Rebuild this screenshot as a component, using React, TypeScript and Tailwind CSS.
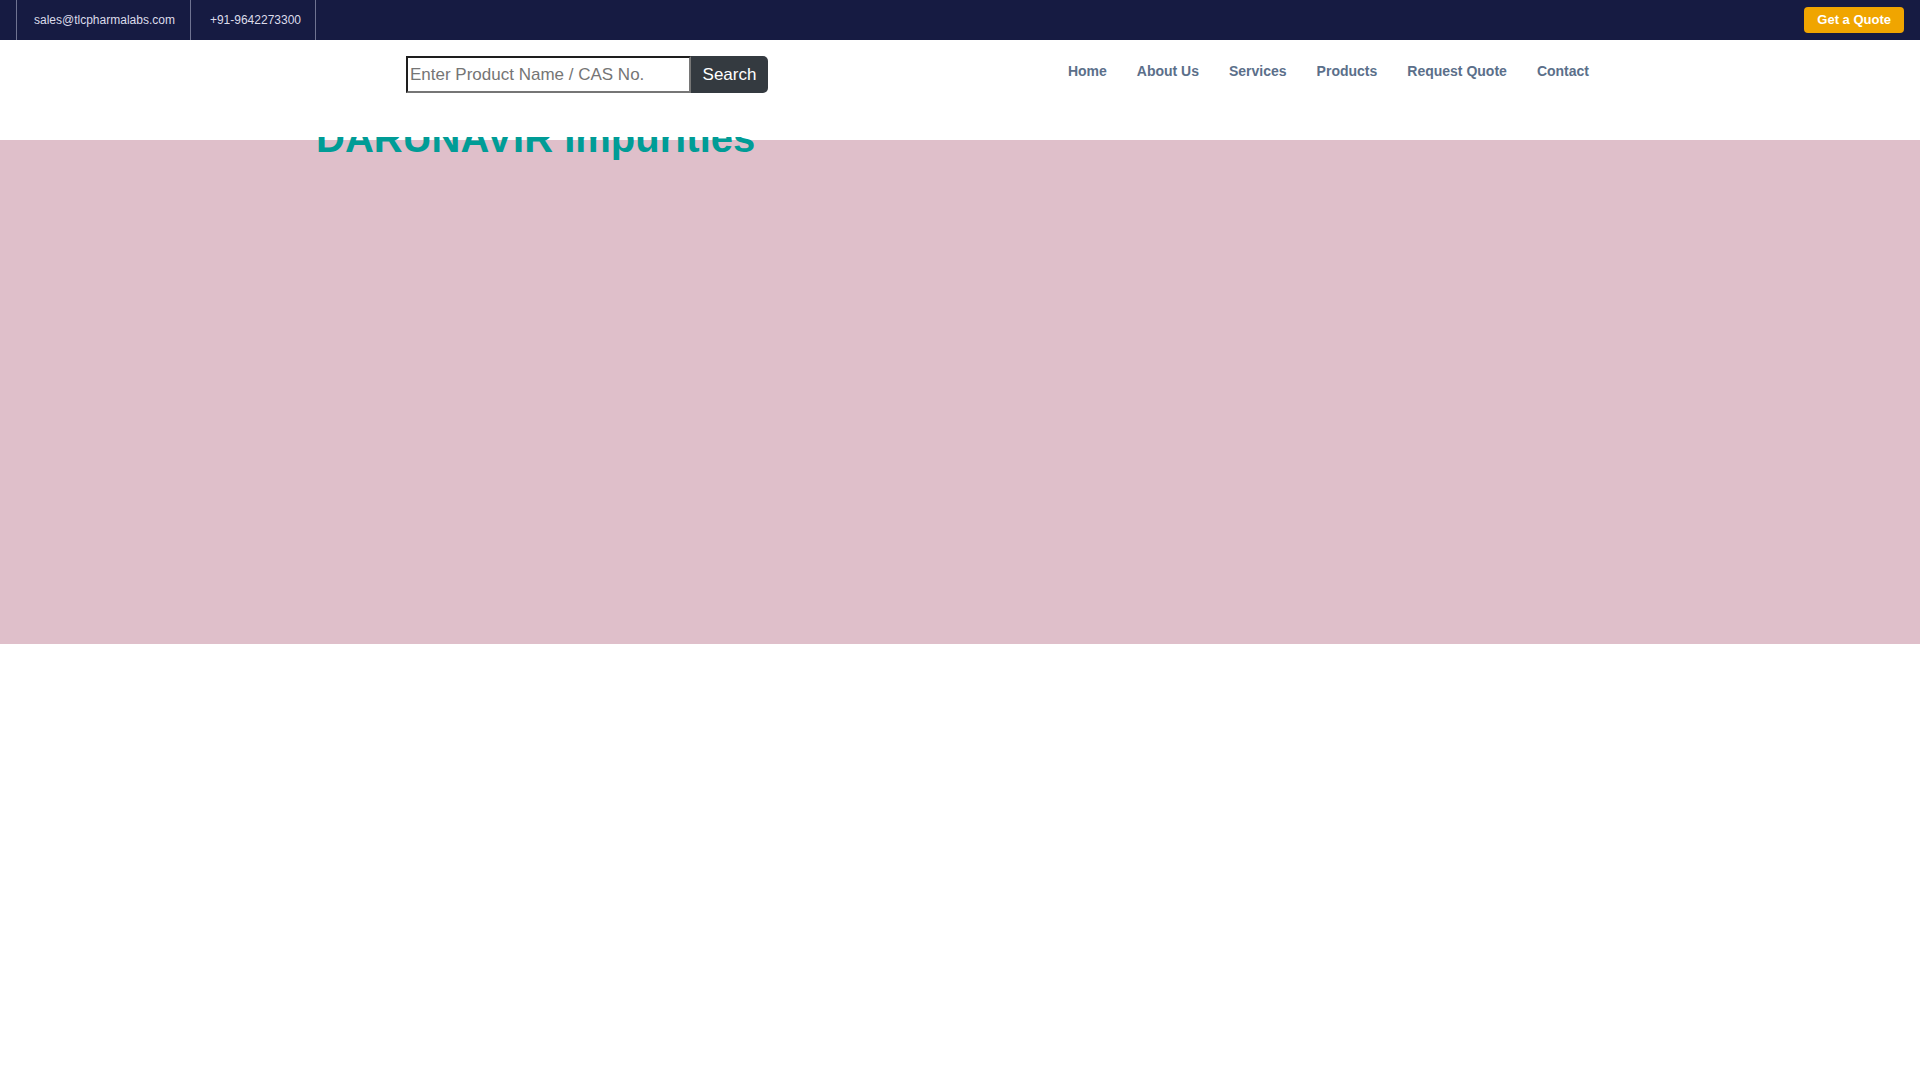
const navItems = ['Home', 'About Us', 'Services', 'Products', 'Request Quote', 'Contact']

function TopBar() {
  return (
    <div className="flex h-10 items-center justify-between bg-[#161b42] pl-4 pr-4">
      <div className="flex h-full items-center text-[12px] text-[#dcdcea]">
        <div className="flex h-full items-center border-l border-[#6f7391] pl-[17px] pr-[15px]">sales@tlcpharmalabs.com</div>
        <div className="flex h-full items-center border-x border-[#6f7391] pl-[19px] pr-[14px]">+91-9642273300</div>
      </div>
      <button className="h-[26px] rounded-[4px] bg-[#f0a500] px-[13px] text-[13px] font-bold text-white">
        Get a Quote
      </button>
    </div>
  )
}

function Header() {
  return (
    <header className="relative z-10 h-[97px] bg-white">
      <div className="mx-auto flex w-[1320px] items-start px-4">
        <form className="ml-[90px] mt-4 flex h-[37px]" onSubmit={(e) => e.preventDefault()}>
          <input
            type="text"
            placeholder="Enter Product Name / CAS No."
            className="h-full w-[285px] border-2 border-t-[#1e1e1e] border-l-[#1e1e1e] border-b-[#767676] border-r-[#767676] px-[2px] text-[17px] text-[#333] placeholder:text-[#757575] outline-none"
          />
          <button className="h-full w-[77px] rounded-r-[5px] bg-[#343a40] text-[17px] text-white">Search</button>
        </form>
        <nav className="ml-auto mt-[21px] flex">
          {navItems.map((item) => (
            <a key={item} href="#" className="px-[15px] text-[14px] leading-5 font-bold text-[#5b6f8a]">
              {item}
            </a>
          ))}
        </nav>
      </div>
    </header>
  )
}

export default function App() {
  return (
    <div className="min-h-screen bg-white font-['Liberation_Sans',Arial,sans-serif]">
      <TopBar />
      <Header />
      <section className="mt-[3px] flex h-[504px] flex-col bg-[#dfbfca]">
        <div className="mx-auto w-[1320px] px-4">
          <h1 className="-mt-[22px] text-[40px] leading-10 font-bold text-[#009c96]">DARUNAVIR Impurities</h1>
        </div>
      </section>
    </div>
  )
}
